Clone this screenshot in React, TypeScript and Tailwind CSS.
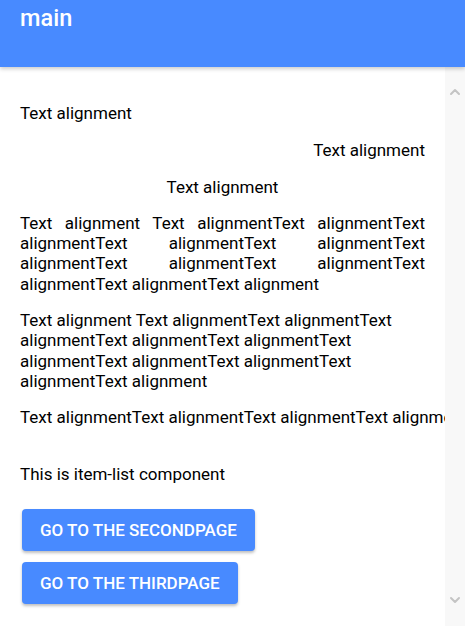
import { ChevronDown, ChevronUp } from 'lucide-react'

const justified = 'Text alignment Text alignmentText alignmentText alignmentText alignmentText alignmentText alignmentText alignmentText alignmentText alignmentText alignmentText alignment'
const wrapped = 'Text alignment Text alignmentText alignmentText alignmentText alignmentText alignmentText alignmentText alignmentText alignmentText alignmentText alignment'

export default function App() {
  return (
    <div className="h-[626px] w-[465px] overflow-hidden bg-white text-black font-['Roboto',sans-serif] flex flex-col">
      {/* Toolbar */}
      <header className="relative z-10 h-[67px] shrink-0 bg-[#488aff] px-5 pt-[4px] shadow-[0_2px_4px_rgba(0,0,0,0.2)]">
        <h1 className="text-[23.5px] font-medium leading-[28px] text-white">main</h1>
      </header>

      <div className="flex flex-1 min-h-0">
        <main className="w-[445px] shrink-0 overflow-hidden px-5 pt-[20px] text-[17px] leading-[20.3px]">
          <p className="mt-4 text-left">Text alignment</p>
          <p className="mt-[17px] text-right">Text alignment</p>
          <p className="mt-4 text-center">Text alignment</p>
          <p className="mt-4 text-justify">{justified}</p>
          <p className="mt-4">{wrapped}</p>
          <p className="mt-4 whitespace-nowrap">Text alignmentText alignmentText alignmentText alignmentText alignment</p>

          <p className="mt-[36px]">This is item-list component</p>

          <div className="mt-[25px] flex flex-col items-start gap-[11px] pl-[2px]">
            <button className="h-[42px] rounded-[4px] bg-[#488aff] px-[18px] text-[17px] font-medium uppercase text-white shadow-[0_2px_3px_rgba(0,0,0,0.25)]">
              Go to the secondpage
            </button>
            <button className="h-[42px] rounded-[4px] bg-[#488aff] px-[18px] text-[17px] font-medium uppercase text-white shadow-[0_2px_3px_rgba(0,0,0,0.25)]">
              Go to the thirdpage
            </button>
          </div>
        </main>

        {/* Scrollbar */}
        <div className="flex w-[20px] flex-col items-center justify-between bg-[#f8f8f8] pt-[17px] pb-[18px]">
          <ChevronUp className="h-[16px] w-[16px] text-[#c4c4c4]" strokeWidth={3} />
          <ChevronDown className="h-[16px] w-[16px] text-[#c4c4c4]" strokeWidth={3} />
        </div>
      </div>
    </div>
  )
}
